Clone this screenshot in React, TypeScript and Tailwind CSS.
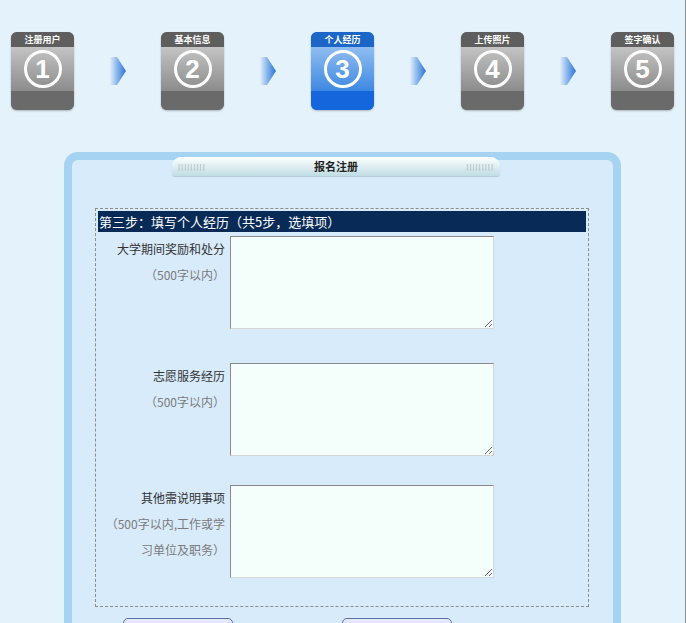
import React from 'react'

const steps = [
  { n: '1', label: '注册用户' },
  { n: '2', label: '基本信息' },
  { n: '3', label: '个人经历', active: true },
  { n: '4', label: '上传照片' },
  { n: '5', label: '签字确认' },
]

function StepIcon({ n, label, active }: { n: string; label: string; active?: boolean }) {
  return (
    <div
      className={
        'w-[63px] h-[78px] rounded-[6px] overflow-hidden flex flex-col shadow-[0_1px_2px_rgba(0,0,0,0.25)] ' +
        (active ? 'bg-[#2f7fe0]' : 'bg-[#8a8a8a]')
      }
    >
      <div
        className={
          'h-[15px] flex items-center justify-center text-[9px] font-bold text-white leading-none ' +
          (active ? 'bg-[#1c66c8]' : 'bg-[#5e5e5e]')
        }
      >
        {label}
      </div>
      <div
        className={
          'h-[44px] flex items-center justify-center ' +
          (active
            ? 'bg-gradient-to-b from-[#8fbdf0] to-[#3d88e2]'
            : 'bg-gradient-to-b from-[#c4c4c4] to-[#8c8c8c]')
        }
      >
        <div className="w-[38px] h-[38px] rounded-full border-[3px] border-white flex items-center justify-center">
          <span className="text-white text-[26px] font-bold leading-none font-['Liberation_Sans',sans-serif]">{n}</span>
        </div>
      </div>
      <div className={'flex-1 ' + (active ? 'bg-[#1565dc]' : 'bg-[#6a6a6a]')} />
    </div>
  )
}

function Arrow() {
  return (
    <svg width="19" height="32" viewBox="0 0 19 32">
      <defs>
        <linearGradient id="ag" x1="0" x2="1" y1="0" y2="0">
          <stop offset="0" stopColor="#e2eefa" />
          <stop offset="0.5" stopColor="#7fb0ea" />
          <stop offset="1" stopColor="#2f73d4" />
        </linearGradient>
      </defs>
      <polygon points="2,2 9,2 18,16 9,30 2,30" fill="url(#ag)" />
    </svg>
  )
}

function Row({ lines, top }: { lines: string[]; top: number }) {
  return (
    <div className="flex gap-[5px]" style={{ marginTop: top }}>
      <div className="w-[127px] text-right text-[12px] leading-[26px]">
        {lines.map((l, i) => (
          <div key={i} className={i === 0 ? 'text-[#333]' : 'text-[#7a7a7a]'}>
            {l}
          </div>
        ))}
      </div>
      <textarea className="w-[264px] h-[93px] bg-[#f4fffb] border border-t-[#8a8a8a] border-l-[#8a8a8a] border-r-[#d6d6d6] border-b-[#d6d6d6] outline-none resize" />
    </div>
  )
}

export default function App() {
  return (
    <div className="min-h-screen bg-[#e4f2fb] border-r border-[#8a8a8a] font-['Noto_Sans_CJK_SC',sans-serif] overflow-hidden">
      <div className="flex items-center gap-[34px] pl-[11px] pt-[32px]">
        {steps.map((s, i) => (
          <React.Fragment key={s.n}>
            {i > 0 && <Arrow />}
            <StepIcon n={s.n} label={s.label} active={s.active} />
          </React.Fragment>
        ))}
      </div>

      <div className="ml-[64px] mt-[42px] w-[557px] rounded-t-[14px] border-[8px] border-b-0 border-[#a6d3f2] bg-[#d8ebfb] pb-[40px]">
        <div className="ml-[100px] -mt-[3px] w-[328px] h-[19px] rounded-t-[9px] rounded-b-[3px] bg-gradient-to-b from-[#ffffff] to-[#bfdde4] flex items-center justify-between px-[6px] shadow-[0_1px_1px_rgba(0,0,0,0.15)]">
          <span className="text-[8px] text-[#a8b4b8] tracking-[1px] font-['Liberation_Sans',sans-serif]">|||||||||</span>
          <span className="text-[11px] font-bold text-[#222]">报名注册</span>
          <span className="text-[8px] text-[#a8b4b8] tracking-[1px] font-['Liberation_Sans',sans-serif]">|||||||||</span>
        </div>

        <div className="ml-[23px] mt-[32px] w-[494px] border border-dashed border-[#8c8c8c] p-[2px] pb-[28px]">
          <div className="h-[21px] bg-[#072a56] text-white text-[13px] leading-[21px] pl-[1px]">
            第三步：填写个人经历（共5步，选填项）
          </div>
          <Row top={4} lines={['大学期间奖励和处分', '（500字以内）']} />
          <Row top={34} lines={['志愿服务经历', '（500字以内）']} />
          <Row top={29} lines={['其他需说明事项', '（500字以内,工作或学', '习单位及职务）']} />
        </div>

        <div className="flex mt-[11px] ml-[51px] gap-[109px]">
          <button className="w-[110px] h-[24px] rounded-[5px] border border-[#5a6ea0] bg-gradient-to-b from-[#e8ecff] to-[#b9c6ee]" />
          <button className="w-[110px] h-[24px] rounded-[5px] border border-[#5a6ea0] bg-gradient-to-b from-[#e8ecff] to-[#b9c6ee]" />
        </div>
      </div>
    </div>
  )
}
